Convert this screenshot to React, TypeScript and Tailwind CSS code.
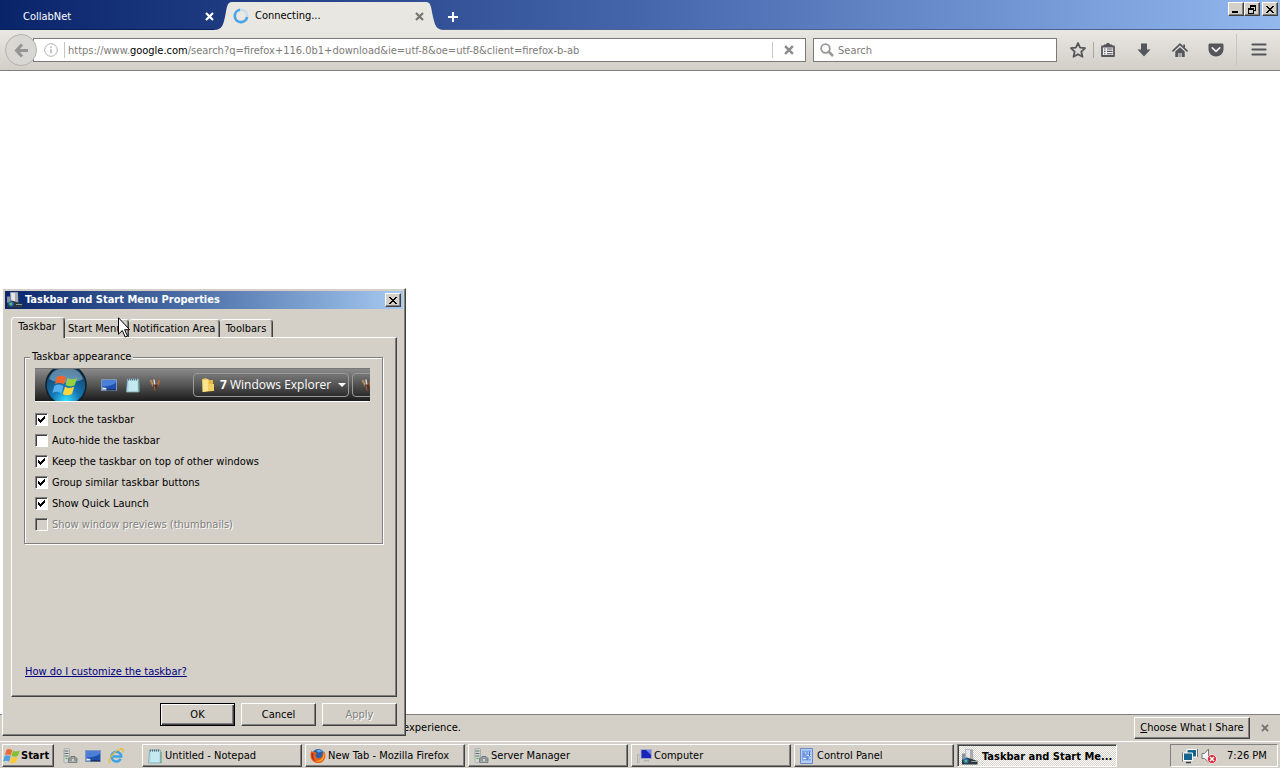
import { useState, type ReactNode } from 'react';

const raised =
  'border border-t-white border-l-white border-r-[#404040] border-b-[#404040] shadow-[inset_-1px_-1px_0_#808080] bg-[#d4d0c8]';
const sunken =
  'border border-t-[#808080] border-l-[#808080] border-r-white border-b-white shadow-[inset_1px_1px_0_#404040]';

function CloseGlyph({ className }: { className: string }) {
  return (
    <svg className={className} viewBox="0 0 9 9" aria-hidden="true">
      <path d="M1 1l7 7M8 1l-7 7" stroke="currentColor" strokeWidth="2.2" fill="none" />
    </svg>
  );
}

function CaptionX() {
  return (
    <svg className="h-[7px] w-2" viewBox="0 0 8 7" shapeRendering="crispEdges" aria-hidden="true">
      <path d="M0 0h2v1h1v1h2V1h1V0h2v1H7v1H6v1H5v1h1v1h1v1h1v1H6V6H5V5H3v1H2v1H0V6h1V5h1V4h1V3H2V2H1V1H0z" fill="#000" />
    </svg>
  );
}

function WindowsFlag({ className }: { className: string }) {
  return (
    <svg className={className} viewBox="0 0 18 16" aria-hidden="true">
      <path d="M3.6 1.600C5.400.4 7.200.8 9.200 2.300L7.800 7.500C5.900 6.200 4 6.100 1.800 7.400z" fill="#ea6c35" />
      <path d="M9.900 2.700c2 1.100 4.200 1.200 6.900-.3l-1.700 5.400c-2.200 1.200-4.400 1.100-6.600.1z" fill="#84bd30" />
      <path d="M1.600 8.200c2.200-1.200 4-1.100 6 .2l-1.500 5.400C4.200 12.400 2.400 12.300.2 13.600z" fill="#4f9ee2" />
      <path d="M8.300 8.800c2.200 1 4.300 1.100 6.500 0l-1.700 5.600c-2.100 1.100-4.200 1-6.400-.1z" fill="#fbc83a" />
    </svg>
  );
}

function NotepadIcon() {
  return (
    <svg className="size-4 shrink-0" viewBox="0 0 16 16" aria-hidden="true">
      <path d="M2.500 2h11L14 15H1.500z" fill="#b2e0ea" stroke="#78abb9" strokeWidth=".8" />
      <path d="M4 5h8M4 7h8M4 9h8M4 11h8M4 13h8" stroke="#e4f7fb" strokeWidth=".8" />
      <path d="M3 2.500h10" stroke="#56646a" strokeWidth="2.200" strokeDasharray="1 1" />
      <path d="M14 4v11" stroke="#5e9e80" strokeWidth="1" />
    </svg>
  );
}

function FirefoxIcon() {
  return (
    <svg className="size-4 shrink-0" viewBox="0 0 16 16" aria-hidden="true">
      <circle cx="8.200" cy="7.500" r="6.500" fill="#2c5ea8" />
      <path d="M6 2.500c2-1 5-.8 6.500 1.500-2-.6-3-.2-3.500.8z" fill="#5fb2e6" />
      <path d="M1.500 2.500C2.300 3.800 3 4 4.200 4c1.300 0 2 .8 2.800 1.300-.2 1-1.500 1.200-1.700 2 .4 2.500 3 3.400 5 2.500 2-.9 2.700-3 2-5.300 1.500 1 1.700-.5 1.600-1.500C16 5.500 16 9.500 14 12.200c-2.500 3.400-7.800 3.900-11 1C.3 10.800-.2 6 1.500 2.500z" fill="#e3601a" />
      <path d="M13.800 4c1.200 3 .7 6-1.300 8-2 1.900-5 2.200-7.500 1 4 .4 7-1.400 8-4.500.5-1.500.6-3 .8-4.500z" fill="#f9b52f" />
      <path d="M1.600 4.500C.8 9 2.500 12 5.500 13.500 3.500 11 2.500 8 3.800 5.800z" fill="#b32f1c" />
    </svg>
  );
}

function ServerIcon() {
  return (
    <svg className="size-4 shrink-0" viewBox="0 0 16 16" aria-hidden="true">
      <path d="M2 1l4-.7 1.500 1V13L3.500 15 2 14z" fill="#d5dbd8" stroke="#98a19e" strokeWidth=".7" />
      <path d="M2.500 3h4M2.500 5.500h4M2.500 8h4" stroke="#5e6e69" strokeWidth="1" />
      <path d="M3.500 10.500h2" stroke="#43b04e" strokeWidth="1.200" />
      <path d="M9 10V8.500h4V10" fill="none" stroke="#6c7474" />
      <path d="M6.500 10h8.500v4.500H6.500z" fill="#a9b0b0" stroke="#6c7575" strokeWidth=".8" />
      <path d="M7 12h8" stroke="#727c7c" />
      <path d="M10 11.300h2v1.500h-2z" fill="#e4e8e8" />
    </svg>
  );
}

function DesktopIcon() {
  return (
    <svg className="size-4 shrink-0" viewBox="0 0 16 16" aria-hidden="true">
      <path d="M.5 2.500h15v11H.5z" fill="#1e50ad" stroke="#8797b4" />
      <path d="M1 3h14v2.500C11 9 6 9.500 1 9.500z" fill="#4a80d8" />
      <path d="M1 12h14v1.500H1z" fill="#1c3262" />
      <path d="M1 10l4.500 1v2.500H1z" fill="#8fb0de" />
      <path d="M2 11.500h3" stroke="#e5edf7" />
    </svg>
  );
}

function IeIcon() {
  return (
    <svg className="size-4 shrink-0" viewBox="0 0 16 16" aria-hidden="true">
      <path d="M12.700 10.800A4.900 4.900 0 1 1 13.200 8.500H5" fill="none" stroke="#3ba4e6" strokeWidth="2.500" />
      <path d="M2.300 14.800C-.8 14 2 8.500 6 5c3.600-3.200 8-5 9-3.300.5.800.2 1.800-.4 3" fill="none" stroke="#edb92c" strokeWidth="1.300" />
    </svg>
  );
}

function ComputerIcon() {
  return (
    <svg className="size-4 shrink-0" viewBox="0 0 16 16" aria-hidden="true">
      <path d="M1.500 6.500h1.500v8H1.500z" fill="#ece9e0" stroke="#a5a59f" strokeWidth=".8" />
      <path d="M5 1.500h10.500v9H5z" fill="#1b25bb" stroke="#a6aec0" strokeWidth=".9" />
      <path d="M10 2h5v5z" fill="#6e86ed" />
      <path d="M8 12h5v1.500H7z" fill="#b4b6b4" />
    </svg>
  );
}

function ControlPanelIcon() {
  return (
    <svg className="size-4 shrink-0" viewBox="0 0 16 16" aria-hidden="true">
      <path d="M1.500.500h12v15h-12z" fill="#b4cff7" stroke="#6e89c2" />
      <path d="M3 2.500h9v10H3z" fill="#7ba3ec" />
      <path d="M4 5h3M9 5h3M4 8h2M8 7.500h4M4 10.500h4M10 10h2" stroke="#e7f1ff" strokeWidth="1.200" />
      <path d="M5 4v5M10.500 4v4M8 8.500V12" stroke="#4869c0" strokeWidth=".9" />
    </svg>
  );
}

function PropertiesIcon() {
  return (
    <svg className="size-4 shrink-0" viewBox="0 0 16 16" aria-hidden="true">
      <path d="M3.500.500h7l.500 11H4z" fill="#e4e6e8" stroke="#a4a8ac" strokeWidth=".7" />
      <path d="M8 1h3v10H8z" fill="#a7acb0" />
      <path d="M0 10l5-1.500L15.500 12v3.500H0z" fill="#2c3940" />
      <path d="M0 4.500h3.500v6H0z" fill="#8793a0" />
      <circle cx="4" cy="11.800" r="2.600" fill="#2774b8" />
      <path d="M2.500 11h2.500v2H3z" fill="#63bd5d" />
      <path d="M9 12.500h6" stroke="#8e999e" />
    </svg>
  );
}

function PencilCup({ className }: { className: string }) {
  return (
    <svg className={className} viewBox="0 0 12 16" aria-hidden="true">
      <path d="M1.500 3l3 6" stroke="#c08a55" strokeWidth="2" />
      <path d="M5 2.500l1 7" stroke="#d9d9d9" strokeWidth="1.500" />
      <path d="M10.500 3L8 9" stroke="#b0683a" strokeWidth="2" />
      <path d="M3.800 7.500h5L7.500 14.500H5.500z" fill="#5a3429" />
      <path d="M5 8.500l1 5" stroke="#9b7a62" strokeWidth=".8" />
    </svg>
  );
}

function CheckRow({ label, checked = false, disabled = false }: { label: string; checked?: boolean; disabled?: boolean }) {
  return (
    <label
      className={
        disabled
          ? 'flex h-[21px] items-center gap-1 text-[#808080] [text-shadow:1px_1px_0_#fff]'
          : 'flex h-[21px] items-center gap-1'
      }
    >
      <span className="relative flex">
        <input
          type="checkbox"
          defaultChecked={checked}
          disabled={disabled}
          className={`peer size-[13px] appearance-none bg-white disabled:bg-[#d4d0c8] ${sunken}`}
        />
        <svg
          className="pointer-events-none absolute top-[3px] left-[3px] hidden size-[7px] peer-checked:block"
          viewBox="0 0 7 7"
          shapeRendering="crispEdges"
          aria-hidden="true"
        >
          <path d="M0 2v3h1v1h1v1h1V6h1V5h1V4h1V3h1V0H6v1H5v1H4v1H3v1H2V3H1V2z" fill="#000" />
        </svg>
      </span>
      <span>{label}</span>
    </label>
  );
}

function TaskButton({ icon, label, active = false }: { icon: ReactNode; label: string; active?: boolean }) {
  return (
    <button
      type="button"
      className={
        active
          ? `flex h-[23px] w-40 min-w-0 items-center gap-1 bg-[repeating-conic-gradient(#fff_0_25%,#d4d0c8_0_50%)] bg-[length:2px_2px] pt-0.5 pl-1 font-bold ${sunken}`
          : `flex h-[23px] w-40 min-w-0 items-center gap-0.5 pl-1 ${raised}`
      }
    >
      {icon}
      <span className="whitespace-nowrap">{label}</span>
    </button>
  );
}

function Browser() {
  return (
    <main className="flex flex-1 flex-col bg-white">
      <header>
        <div className="flex h-[30px] items-start bg-linear-to-r from-[#0a246a] via-[#4666ac] via-50% to-[#92b8ee]">
          <div className="flex h-full w-[214px] shrink-0 items-center justify-between border-b border-[#0a1f55] pt-1 pl-[23px] text-white">
            <span>CollabNet</span>
            <button type="button" aria-label="Close CollabNet" className="flex">
              <CloseGlyph className="size-[9px]" />
            </button>
          </div>
          <div className="flex h-full shrink-0 items-stretch">
            <svg className="h-[30px] w-[18px]" viewBox="0 0 18 30" aria-hidden="true">
              <path d="M0 30C8 30 9 25 11 17C13 7 13 2 18 2V30z" fill="#e9e7e2" />
            </svg>
            <div className="mt-0.5 flex w-[194px] items-center bg-[#e9e7e2] pl-px">
              <svg className="size-4" viewBox="0 0 16 16" aria-hidden="true">
                <circle cx="8" cy="8" r="6.200" fill="none" stroke="#c3dcee" strokeWidth="2.400" />
                <path d="M7 1.800A6.200 6.200 0 1 0 14.100 9" fill="none" stroke="#4ba5e4" strokeWidth="2.600" />
              </svg>
              <span className="ml-1.5 flex-1">Connecting...</span>
              <button type="button" aria-label="Close tab" className="mr-0.5 flex text-[#77756f]">
                <CloseGlyph className="size-[9px]" />
              </button>
            </div>
            <svg className="h-[30px] w-[18px]" viewBox="0 0 18 30" aria-hidden="true">
              <path d="M18 30C10 30 9 25 7 17C5 7 5 2 0 2V30z" fill="#e9e7e2" />
            </svg>
          </div>
          <div className="flex h-full flex-1 items-center border-b border-[#4b6290] pt-1 pl-1">
            <button type="button" aria-label="New tab" className="flex text-white">
              <svg className="size-[10px]" viewBox="0 0 10 10" aria-hidden="true">
                <path d="M5 0v10M0 5h10" stroke="currentColor" strokeWidth="2" />
              </svg>
            </button>
          </div>
          <div className="flex h-full border-b border-[#4b6290] pt-0.5 pr-0.5">
            <button type="button" aria-label="Minimize" className={`flex h-3.5 w-4 items-end justify-center pb-0.5 ${raised}`}>
              <span className="mr-0.5 h-0.5 w-1.5 bg-black" />
            </button>
            <button type="button" aria-label="Restore" className={`flex h-3.5 w-4 items-center justify-center ${raised}`}>
              <svg className="size-[9px]" viewBox="0 0 9 9" shapeRendering="crispEdges" aria-hidden="true">
                <path d="M2 0h6v6H6V5h1V2H3v1H2zM0 3h6v6H0zM1 5v3h4V5z" fillRule="evenodd" fill="#000" />
              </svg>
            </button>
            <button type="button" aria-label="Close window" className={`ml-0.5 flex h-3.5 w-4 items-center justify-center ${raised}`}>
              <CaptionX />
            </button>
          </div>
        </div>

        <div className="flex h-[41px] items-center border-b border-[#808080] bg-linear-to-b from-[#e9e7e2] to-[#d2cfc9] pr-[13px]">
          <button
            type="button"
            aria-label="Back"
            className="z-10 ml-[5px] flex size-8 shrink-0 items-center justify-center rounded-full border border-[#b4b2ae] bg-[#d9d7d3] text-[#969492]"
          >
            <svg className="size-[15px]" viewBox="0 0 15 15" aria-hidden="true">
              <path d="M8 1.500L2.500 7.500L8 13.500M3 7.500H14" fill="none" stroke="currentColor" strokeWidth="3" />
            </svg>
          </button>
          <div className="-ml-1 flex h-6 min-w-0 flex-1 items-center border border-[#7c7a76] bg-white pl-2.5">
            <svg className="size-3.5 shrink-0 text-[#b0b0b0]" viewBox="0 0 14 14" aria-hidden="true">
              <circle cx="7" cy="7" r="6.300" fill="none" stroke="currentColor" />
              <path d="M7 6v4.500M7 3.500v1.500" stroke="currentColor" strokeWidth="1.400" />
            </svg>
            <span className="ml-1.5 h-4 w-px bg-[#c6c6c6]" />
            <div
              role="textbox"
              aria-label="Address"
              contentEditable
              suppressContentEditableWarning
              className="ml-[3px] min-w-0 flex-1 truncate pt-0.5 text-[#7d7b78] outline-none"
            >
              https://www.<span className="text-black">google.com</span>
              /search?q=firefox+116.0b1+download&amp;ie=utf-8&amp;oe=utf-8&amp;client=firefox-b-ab
            </div>
            <span className="h-4 w-px bg-[#c6c6c6]" />
            <button type="button" aria-label="Stop" className="flex w-8 justify-center text-[#8a8a8d]">
              <CloseGlyph className="size-[10px]" />
            </button>
          </div>
          <label className="ml-[7px] flex h-6 w-[244px] shrink-0 items-center gap-1 border border-[#7c7a76] bg-white pl-1.5">
            <svg className="size-3.5 shrink-0 text-[#9a9896]" viewBox="0 0 14 14" aria-label="Search the web">
              <circle cx="5.500" cy="5.500" r="4.300" fill="none" stroke="currentColor" strokeWidth="1.800" />
              <path d="M8.500 8.500l4.500 4.500" stroke="currentColor" strokeWidth="2.500" />
            </svg>
            <input type="text" placeholder="Search" className="w-full pt-0.5 outline-none placeholder:text-[#7d7b78]" />
          </label>
          <div className="ml-3 flex shrink-0 items-center text-[#54565b]">
            <button type="button" aria-label="Bookmark this page" className="flex">
              <svg className="size-[18px]" viewBox="0 0 18 18" aria-hidden="true">
                <path d="M9 2l2.100 4.700 5 .5-3.800 3.500 1.200 5.100L9 13.200l-4.500 2.600 1.200-5.100L1.900 7.200l5-.5z" fill="none" stroke="currentColor" strokeWidth="1.800" strokeLinejoin="round" />
              </svg>
            </button>
            <span className="ml-1.5 h-4 w-px bg-[#aaa8a4]" />
            <button type="button" aria-label="Bookmarks" className="ml-1.5 flex">
              <svg className="size-4" viewBox="0 0 16 16" aria-hidden="true">
                <path d="M2 4.500h12v9.500H2z" fill="#efeeec" stroke="currentColor" strokeWidth="1.800" strokeLinejoin="round" />
                <path d="M4 4.500V3h2.300a1.700 1.700 0 0 1 3.400 0H12v1.500z" fill="currentColor" stroke="currentColor" />
                <path d="M4 7h1.500M7 7h5.500M4 9.400h1.500M7 9.400h5.500M4 11.800h1.500M7 11.800h5.500" stroke="currentColor" strokeWidth="1.100" />
              </svg>
            </button>
            <button type="button" aria-label="Downloads" className="ml-5 flex">
              <svg className="size-4" viewBox="0 0 16 16" aria-hidden="true">
                <path d="M5 1.500h6v6h3.500L8 14.500 1.500 7.500H5z" fill="currentColor" strokeLinejoin="round" />
              </svg>
            </button>
            <button type="button" aria-label="Home" className="ml-5 flex">
              <svg className="size-4" viewBox="0 0 16 16" aria-hidden="true">
                <path d="M1 8.800L8 2.200l7 6.600" fill="none" stroke="currentColor" strokeWidth="1.700" strokeLinecap="round" />
                <path d="M3.300 9.500L8 5.200l4.700 4.300V15H9.600v-4H6.400v4H3.300z" fill="currentColor" />
                <path d="M11.300 2.500h1.700V6l-1.700-1.600z" fill="currentColor" />
                <path d="M6.400 11h3.200v4H6.400z" fill="#c3c2c0" />
                <path d="M8 11v4" stroke="currentColor" strokeWidth=".7" />
              </svg>
            </button>
            <button type="button" aria-label="Pocket" className="ml-5 flex">
              <svg className="size-4" viewBox="0 0 16 16" aria-hidden="true">
                <path d="M2 1.500h12c1 0 1.500.6 1.500 1.500v4.500a7.500 7 0 0 1-15 0V3C.5 2.100 1 1.500 2 1.500z" fill="currentColor" />
                <path d="M4.300 5.800L8 9.300l3.700-3.500" fill="none" stroke="#f2f0ec" strokeWidth="1.700" strokeLinecap="round" />
              </svg>
            </button>
            <span className="ml-3 h-8 w-px bg-[#c9c6c0]" />
            <button type="button" aria-label="Open menu" className="ml-3.5 flex">
              <svg className="size-4" viewBox="0 0 16 16" aria-hidden="true">
                <path d="M1.500 2.500h13M1.500 7.500h13M1.500 12.500h13" stroke="currentColor" strokeWidth="2.200" strokeLinecap="round" />
              </svg>
            </button>
          </div>
        </div>
      </header>

      <div className="flex-1" />

      <div className="flex h-[27px] items-center border-t border-[#808080] bg-[#d4d0c8] pr-[11px]">
        <span className="ml-[403px] flex-1">experience.</span>
        <button type="button" className={`flex h-[22px] w-[116px] items-center justify-center whitespace-nowrap ${raised}`}>
          <span className="underline">C</span>hoose What I Share
        </button>
        <button type="button" aria-label="Dismiss" className="ml-[11px] flex text-[#77756f]">
          <CloseGlyph className="size-2" />
        </button>
      </div>
    </main>
  );
}

const inactiveTab =
  'mt-0.5 h-[18px] rounded-t-sm border-t border-r border-t-white border-r-[#404040] shadow-[inset_-1px_0_0_#808080]';

function PropertiesDialog() {
  const [open, setOpen] = useState(true);
  if (!open) return null;
  return (
    <section
      role="dialog"
      aria-labelledby="dialog-title"
      className={`absolute bottom-8 left-0.5 z-20 flex h-[448px] w-[404px] flex-col p-0.5 ${raised}`}
    >
      <div className="flex h-[18px] shrink-0 items-center bg-linear-to-r from-[#0a246a] to-[#a6caf0] pr-0.5 pl-0.5 text-white">
        <PropertiesIcon />
        <h1 id="dialog-title" className="ml-0.5 flex-1 font-bold">
          Taskbar and Start Menu Properties
        </h1>
        <button
          type="button"
          aria-label="Close"
          onClick={() => setOpen(false)}
          className={`flex h-3.5 w-4 items-center justify-center ${raised}`}
        >
          <CaptionX />
        </button>
      </div>

      <div className="flex min-w-0 flex-1 flex-col px-1.5 pt-2 pb-[7px]">
        <div role="tablist" className="flex h-5 items-start">
          <button
            type="button"
            role="tab"
            aria-selected="true"
            className="z-10 h-[21px] w-[54px] rounded-t-sm border-t border-r border-l border-t-white border-r-[#404040] border-l-white bg-[#d4d0c8] pr-0.5 pb-0.5 shadow-[inset_-1px_0_0_#808080]"
          >
            Taskbar
          </button>
          <button type="button" role="tab" aria-selected="false" className={`w-16 pl-[3px] text-left ${inactiveTab}`}>
            Start Menu
          </button>
          <button type="button" role="tab" aria-selected="false" className={`w-[91px] ${inactiveTab}`}>
            <span className="flex justify-center whitespace-nowrap">Notification Area</span>
          </button>
          <button type="button" role="tab" aria-selected="false" className={`w-[53px] ${inactiveTab}`}>
            Toolbars
          </button>
        </div>

        <div role="tabpanel" className={`flex min-w-0 flex-1 flex-col px-3 pt-3 pb-4 ${raised}`}>
          <fieldset className="mr-px min-w-0 border border-[#808080] px-2.5 pb-2 shadow-[1px_1px_0_#fff,inset_1px_1px_0_#fff]">
            <legend className="-ml-[5px] h-3.5 bg-[#d4d0c8] px-0.5 leading-3.5">Taskbar appearance</legend>
            <div className="mr-0.5 mt-1 flex h-[34px] items-center overflow-hidden border-t border-b border-t-[#777] border-b-white bg-linear-to-b from-[#8a8a8a] via-[#555] via-50% to-[#1c1c1c] text-white">
              <svg className="ml-2.5 size-[42px] shrink-0" viewBox="0 0 42 42" aria-hidden="true">
                <defs>
                  <radialGradient id="orb" cx=".5" cy=".9" r=".85">
                    <stop offset="0" stopColor="#35e2ff" />
                    <stop offset=".4" stopColor="#1478b5" />
                    <stop offset="1" stopColor="#133b5f" />
                  </radialGradient>
                </defs>
                <circle cx="21" cy="21" r="20" fill="url(#orb)" stroke="#10202b" strokeWidth="1.500" />
                <path d="M4 15C7 6 14 4 21 4s14 2 17 11c-9 5-25 5-34 0z" fill="#b7d3e2" opacity=".45" />
                <path d="M12 13c3-2 6-1.500 9 .3l-2 7.200c-3-1.800-6-2-9-.2z" fill="#ee6530" />
                <path d="M22.500 14c3 1.600 6 1.800 9.500 0l-2.300 7.300c-3 1.600-6 1.500-9.200-.2z" fill="#97cf43" />
                <path d="M9.500 21.800c3-1.800 6-1.500 9 .2l-2.200 7.200c-3-1.700-6-1.900-9-.1z" fill="#56b0ee" />
                <path d="M20 22.700c3 1.600 6 1.700 9.200.1L27 30c-3 1.600-6 1.600-9.200-.1z" fill="#ffd441" />
              </svg>
              <span className="ml-3.5"><DesktopIcon /></span>
              <span className="ml-2"><NotepadIcon /></span>
              <PencilCup className="ml-2 h-4 w-3 shrink-0" />
              <div className="ml-8 flex h-6 w-[156px] shrink-0 items-center rounded-sm border border-[#9a9a9a] bg-linear-to-b from-[#777] via-[#555] via-50% to-[#2c2c2c] pl-1.5 text-xs">
                <svg className="size-4 shrink-0" viewBox="0 0 16 16" aria-hidden="true">
                  <path d="M2 2l4-1 2 2h5v11L3 15z" fill="#e7b93f" />
                  <path d="M2.500 3l6-1v12l-6 1z" fill="#fbe48b" />
                  <path d="M9 7h5v7H9z" fill="#f3cf63" />
                </svg>
                <span className="ml-1 flex-1 font-['Open_Sans',sans-serif] whitespace-nowrap">
                  <b>7</b> Windows Explorer
                </span>
                <svg className="mr-0.5 h-1 w-2 shrink-0" viewBox="0 0 8 4" aria-hidden="true">
                  <path d="M0 0h8L4 4z" fill="#fff" />
                </svg>
              </div>
              <div className="ml-[3px] flex h-6 w-10 shrink-0 items-center rounded-sm border border-[#9a9a9a] bg-linear-to-b from-[#777] to-[#2c2c2c] pl-2">
                <PencilCup className="h-4 w-3 shrink-0" />
              </div>
            </div>
            <div className="mt-[7px] flex flex-col">
              <CheckRow label="Lock the taskbar" checked />
              <CheckRow label="Auto-hide the taskbar" />
              <CheckRow label="Keep the taskbar on top of other windows" checked />
              <CheckRow label="Group similar taskbar buttons" checked />
              <CheckRow label="Show Quick Launch" checked />
              <CheckRow label="Show window previews (thumbnails)" disabled />
            </div>
          </fieldset>
          <a href="#help" className="mt-auto self-start pl-px text-[#00007f] underline">
            How do I customize the taskbar?
          </a>
        </div>

        <div className="mt-1.5 flex justify-end gap-1.5">
          <button
            type="button"
            className="h-[23px] w-[75px] border border-black bg-[#d4d0c8] shadow-[inset_1px_1px_0_#fff,inset_-1px_-1px_0_#404040,inset_-2px_-2px_0_#808080]"
          >
            OK
          </button>
          <button type="button" className={`h-[23px] w-[75px] ${raised}`}>
            Cancel
          </button>
          <button type="button" disabled className={`h-[23px] w-[75px] text-[#808080] [text-shadow:1px_1px_0_#fff] ${raised}`}>
            Apply
          </button>
        </div>
      </div>

      <svg className="absolute top-[28px] left-[115px] z-20 h-[21px] w-3" viewBox="0 0 12 21" aria-hidden="true">
        <path d="M.500.800v16.400l3.800-3.700 2.900 6.500 2.300-1-2.900-6.300h5z" fill="#fff" stroke="#000" />
      </svg>
    </section>
  );
}

function Taskbar() {
  return (
    <footer className="flex h-[27px] shrink-0 items-start border-t border-white bg-[#d4d0c8] pt-0.5 pr-0.5 pl-0.5">
      <button type="button" className={`flex h-[23px] w-[52px] shrink-0 items-center font-bold ${raised}`}>
        <WindowsFlag className="h-4 w-[18px] shrink-0" />
        Start
      </button>
      <div className="ml-2 flex h-[23px] w-[80px] shrink-0 items-center gap-[7px]">
        <button type="button" aria-label="Server Manager"><ServerIcon /></button>
        <button type="button" aria-label="Show desktop"><DesktopIcon /></button>
        <button type="button" aria-label="Internet Explorer"><IeIcon /></button>
      </div>
      <nav aria-label="Open windows" className="flex min-w-0 flex-1 gap-[3px]">
        <TaskButton icon={<NotepadIcon />} label="Untitled - Notepad" />
        <TaskButton icon={<FirefoxIcon />} label="New Tab - Mozilla Firefox" />
        <TaskButton icon={<ServerIcon />} label="Server Manager" />
        <TaskButton icon={<ComputerIcon />} label="Computer" />
        <TaskButton icon={<ControlPanelIcon />} label="Control Panel" />
        <TaskButton icon={<PropertiesIcon />} label="Taskbar and Start Me..." active />
      </nav>
      <div className="flex h-[23px] w-[108px] shrink-0 items-center border border-t-[#808080] border-r-white border-b-white border-l-[#808080] pl-[11px]">
        <svg className="size-4" viewBox="0 0 16 16" aria-hidden="true">
          <path d="M5 1.500h9.500v7.500H5z" fill="#16638f" stroke="#fff" />
          <path d="M1.500 5h9v7.500h-9z" fill="#16638f" stroke="#fff" />
          <path d="M4 14.500h5" stroke="#32424d" strokeWidth="1.500" />
          <path d="M.5 4.500v9M15.500 1v8" stroke="#3c4a55" strokeWidth=".7" />
        </svg>
        <svg className="ml-[3px] size-4" viewBox="0 0 16 16" aria-hidden="true">
          <path d="M1 5.500h2.500L7.500 1v13L3.500 10.500H1z" fill="#f3f3f3" stroke="#777" />
          <circle cx="11" cy="11" r="4.500" fill="#d32839" stroke="#fff" strokeWidth=".8" />
          <path d="M9 9l4 4M13 9l-4 4" stroke="#fff" strokeWidth="1.500" />
        </svg>
        <time className="ml-2.5 whitespace-nowrap">7:26 PM</time>
      </div>
    </footer>
  );
}

export default function App() {
  return (
    <div className="relative flex min-h-screen flex-col overflow-hidden bg-white font-['DejaVu_Sans_Condensed','Noto_Sans',sans-serif] text-[11px] leading-4 text-black">
      <Browser />
      <PropertiesDialog />
      <Taskbar />
    </div>
  );
}
